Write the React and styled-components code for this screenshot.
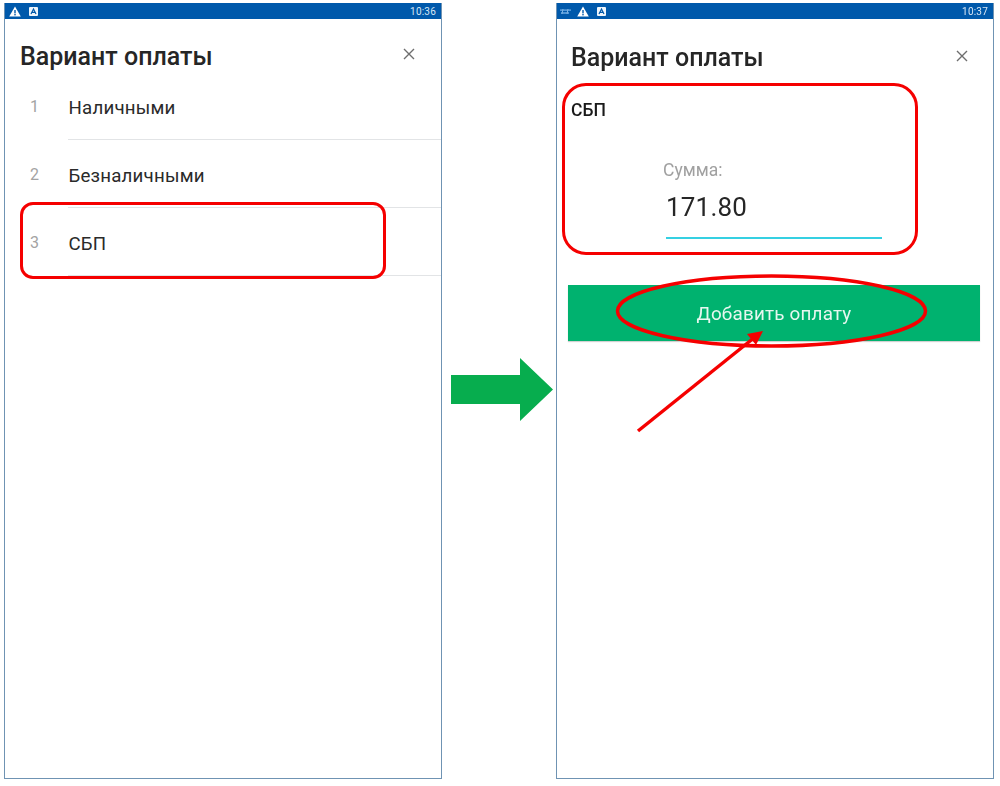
import React from 'react';
import styled, { createGlobalStyle } from 'styled-components';

const GlobalStyle = createGlobalStyle`
  html, body {
    margin: 0;
    padding: 0;
    background: #fff;
  }
  body {
    font-family: Roboto, "Liberation Sans", sans-serif;
    color: #212121;
  }
`;

const Page = styled.div`
  display: flex;
  align-items: flex-start;
  width: 1000px;
  height: 786px;
  padding: 3px 0 0 4px;
  box-sizing: border-box;
  overflow: hidden;
  filter: blur(0.35px);
`;

const Phone = styled.div`
  position: relative;
  width: 438px;
  height: 776px;
  box-sizing: border-box;
  flex: none;
  display: flex;
  flex-direction: column;
  background: #fff;
  border: 1px solid #6f93b3;
  border-top: 0;
`;

const StatusBar = styled.div`
  display: flex;
  align-items: center;
  gap: 8px;
  height: 16px;
  padding: 0 5px 0 4px;
  flex: none;
  background: #0059ab;
`;

const Clock = styled.span`
  margin-left: auto;
  font-size: 10px;
  color: #d7e6f4;
  letter-spacing: 0.2px;
`;

const Header = styled.div`
  display: flex;
  align-items: flex-start;
  justify-content: space-between;
  padding: ${(p) => p.$top}px ${(p) => p.$right}px 0 ${(p) => p.$left}px;
  height: 53px;
  box-sizing: border-box;
  flex: none;
`;

const Title = styled.h1`
  margin: 0;
  font-size: 25px;
  line-height: 32px;
  font-weight: 500;
  color: #262626;
`;

const CloseIcon = styled.svg`
  width: 12px;
  height: 12px;
  margin-top: ${(p) => p.$top}px;
  stroke: #6e6e6e;
  stroke-width: 1.4;
  fill: none;
`;

const OptionList = styled.ul`
  list-style: none;
  margin: 0;
  padding: 0;
`;

const Option = styled.li`
  display: flex;
  align-items: center;
  height: 68px;
`;

const OptionNumber = styled.span`
  width: 63px;
  padding: 0 0 0 25px;
  box-sizing: border-box;
  font-size: 16px;
  color: #a3a3a3;
  flex: none;
`;

const OptionLabel = styled.span`
  flex: 1;
  align-self: stretch;
  display: flex;
  align-items: center;
  padding: 4px 0 0 0.5px;
  font-size: 18.7px;
  letter-spacing: 0.2px;
  color: #2a2a2a;
  border-bottom: 1px solid #e2e4e6;
`;

const Form = styled.div`
  display: flex;
  flex-direction: column;
  padding: 28px 0 0 14px;
`;

const MethodName = styled.div`
  font-size: 17.5px;
  line-height: 20px;
  font-weight: 500;
  color: #1a1a1a;
`;

const AmountField = styled.div`
  display: flex;
  flex-direction: column;
  width: 219px;
  margin: 39px 0 0 92px;
`;

const AmountLabel = styled.span`
  font-size: 17.5px;
  line-height: 22px;
  color: #a0a0a0;
`;

const AmountValue = styled.div`
  margin: 8px 0 0 3px;
  padding-bottom: 12px;
  font-size: 26px;
  line-height: 36px;
  letter-spacing: 0.2px;
  color: #262626;
  border-bottom: 2px solid #35d0e2;
`;

const AddButton = styled.button`
  display: block;
  width: 412px;
  height: 56px;
  margin: 46px 0 0 11px;
  padding: 1px 0 0;
  border: 0;
  background: #00b26f;
  box-shadow: 0 1px 1px rgba(0, 0, 0, 0.18);
  color: #e6f7ef;
  font-family: inherit;
  font-size: 18.85px;
  letter-spacing: 0.2px;
`;

const ArrowSlot = styled.div`
  width: 114px;
  box-sizing: border-box;
  flex: none;
  padding: 355px 0 0 9px;
`;

const Highlight = styled.div`
  position: absolute;
  left: ${(p) => p.$left}px;
  top: ${(p) => p.$top}px;
  width: ${(p) => p.$width}px;
  height: ${(p) => p.$height}px;
  box-sizing: border-box;
  border: 3.5px solid #f50000;
  border-radius: ${(p) => p.$radius}px;
  pointer-events: none;
`;

const Annotation = styled.svg`
  position: absolute;
  left: 0;
  top: 0;
  width: 437px;
  height: 500px;
  pointer-events: none;
`;

const SimGlyph = styled.svg`
  margin: 0 -2px 0 -1px;
`;

const WarningIcon = () => (
  <svg width="12" height="11" viewBox="0 0 12 11">
    <path d="M6 .5 11.8 10.5H.2Z" fill="#fff" />
    <rect x="5.3" y="4" width="1.4" height="3.4" fill="#0059ab" />
    <rect x="5.3" y="8" width="1.4" height="1.4" fill="#0059ab" />
  </svg>
);

const KeyboardIcon = () => (
  <svg width="9" height="9" viewBox="0 0 9 9">
    <rect width="9" height="9" rx="1" fill="#eef5fb" />
    <path d="M2 7 4.5 2 7 7M3 5.4H6" fill="none" stroke="#0059ab" strokeWidth="1.2" />
  </svg>
);

const SimIcon = () => (
  <SimGlyph width="11" height="7" viewBox="0 0 11 7">
    <path d="M0 2.2H11M1 5H9" stroke="#4f95d6" strokeWidth="1.8" />
    <path d="M3 1 2 6M8 1 7 6" stroke="#7fb4e2" strokeWidth="1" />
  </SimGlyph>
);

const Close = ({ top }) => (
  <CloseIcon viewBox="0 0 12 12" $top={top}>
    <path d="M1 1 11 11M11 1 1 11" />
  </CloseIcon>
);

const options = ['Наличными', 'Безналичными', 'СБП'];

const App = () => (
  <>
    <GlobalStyle />
    <Page>
      <Phone>
        <StatusBar>
          <WarningIcon />
          <KeyboardIcon />
          <Clock>10:36</Clock>
        </StatusBar>
        <Header $top={22} $left={15} $right={26}>
          <Title>Вариант оплаты</Title>
          <Close top={7} />
        </Header>
        <OptionList>
          {options.map((label, index) => (
            <Option key={label}>
              <OptionNumber>{index + 1}</OptionNumber>
              <OptionLabel>{label}</OptionLabel>
            </Option>
          ))}
        </OptionList>
        <Highlight $left={15} $top={199} $width={366} $height={77} $radius={13} />
      </Phone>

      <ArrowSlot>
        <svg width="102" height="63" viewBox="0 0 102 63">
          <path d="M0 17H69V0L102 31.5 69 63V46H0Z" fill="#07ad4e" />
        </svg>
      </ArrowSlot>

      <Phone>
        <StatusBar>
          <SimIcon />
          <WarningIcon />
          <KeyboardIcon />
          <Clock>10:37</Clock>
        </StatusBar>
        <Header $top={23} $left={14} $right={25}>
          <Title>Вариант оплаты</Title>
          <Close top={8} />
        </Header>
        <Form>
          <MethodName>СБП</MethodName>
          <AmountField>
            <AmountLabel>Сумма:</AmountLabel>
            <AmountValue>171.80</AmountValue>
          </AmountField>
        </Form>
        <AddButton>Добавить оплату</AddButton>
        <Highlight $left={5} $top={80} $width={356} $height={172} $radius={24} />
        <Annotation viewBox="0 0 437 500">
          <ellipse cx="214.5" cy="308" rx="154" ry="35" fill="none" stroke="#f50000" strokeWidth="3.5" />
          <path d="M81 428 198 334" stroke="#f50000" strokeWidth="3.5" fill="none" />
          <path d="M206 328 190 331 199 342Z" fill="#f50000" />
        </Annotation>
      </Phone>
    </Page>
  </>
);

export default App;
